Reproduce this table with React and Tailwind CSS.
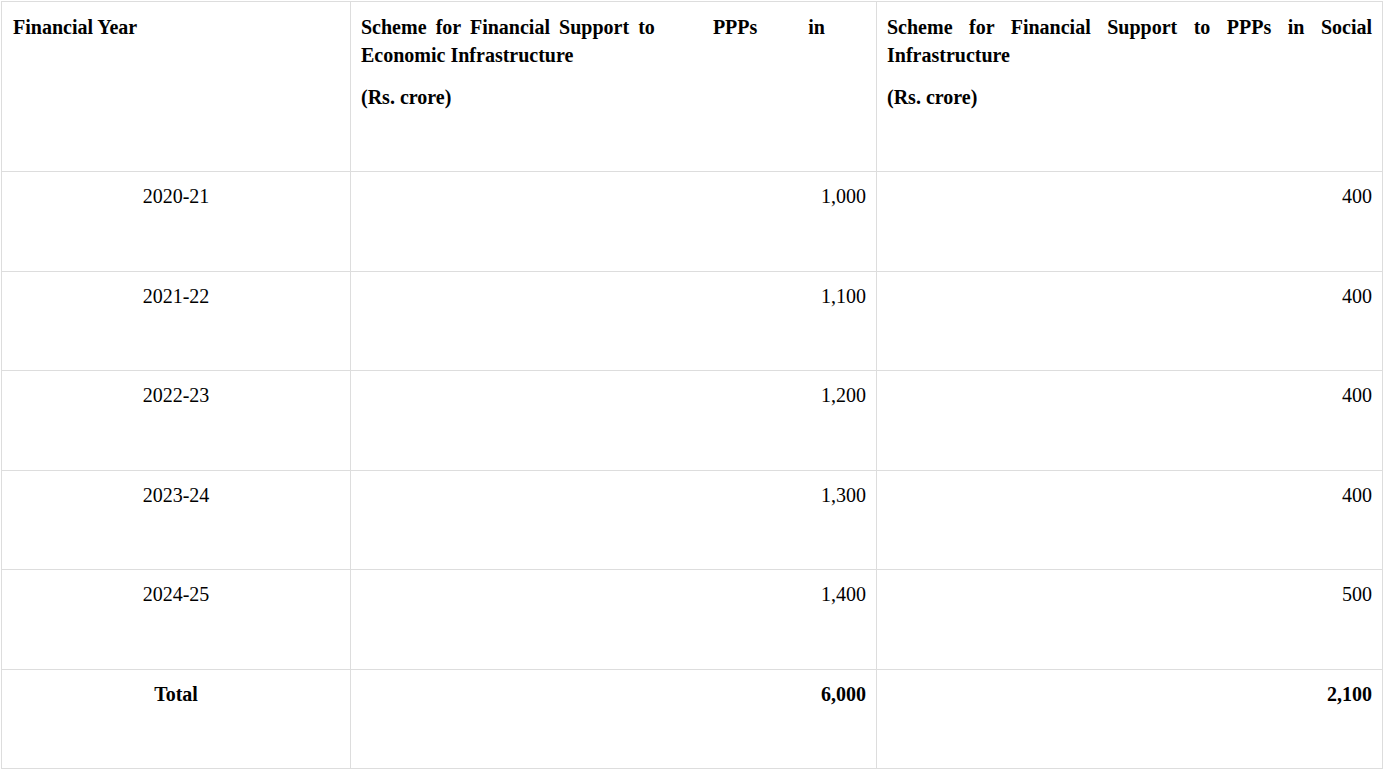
const rows = [
  { year: "2020-21", eco: "1,000", soc: "400" },
  { year: "2021-22", eco: "1,100", soc: "400" },
  { year: "2022-23", eco: "1,200", soc: "400" },
  { year: "2023-24", eco: "1,300", soc: "400" },
  { year: "2024-25", eco: "1,400", soc: "500" },
];

const cell = "border border-[#dddddd] align-top px-[10px] pt-[10px] pb-0";

export default function App() {
  return (
    <div className="min-h-screen bg-white pl-px pt-px font-['Liberation_Serif','Times_New_Roman',serif] text-[20px] leading-[28px] text-black">
      <table className="table-fixed border-collapse w-[1381px]">
        <colgroup>
          <col className="w-[349px]" />
          <col className="w-[526px]" />
          <col className="w-[506px]" />
        </colgroup>
        <tbody>
          <tr className="h-[170px]">
            <td className={`${cell} pl-[11px] pt-[11px] font-bold`}>Financial Year</td>
            <td className={`${cell} pt-[11px] font-bold text-justify`}>
              <p>
                Scheme for Financial Support to<span className="inline-block w-[58px]" />PPPs
                <span className="inline-block w-[51px]" />in
                <span className="inline-block w-[41px]" /> Economic Infrastructure
              </p>
              <p className="mt-[14px]">(Rs. crore)</p>
            </td>
            <td className={`${cell} pt-[11px] font-bold text-justify`}>
              <p>Scheme for Financial Support to PPPs in Social Infrastructure</p>
              <p className="mt-[14px]">(Rs. crore)</p>
            </td>
          </tr>
          {rows.map((r) => (
            <tr key={r.year} className="h-[99.5px]">
              <td className={`${cell} text-center`}>{r.year}</td>
              <td className={`${cell} text-right`}>{r.eco}</td>
              <td className={`${cell} text-right`}>{r.soc}</td>
            </tr>
          ))}
          <tr className="h-[99.5px] font-bold">
            <td className={`${cell} text-center`}>Total</td>
            <td className={`${cell} text-right`}>6,000</td>
            <td className={`${cell} text-right`}>2,100</td>
          </tr>
        </tbody>
      </table>
    </div>
  );
}
